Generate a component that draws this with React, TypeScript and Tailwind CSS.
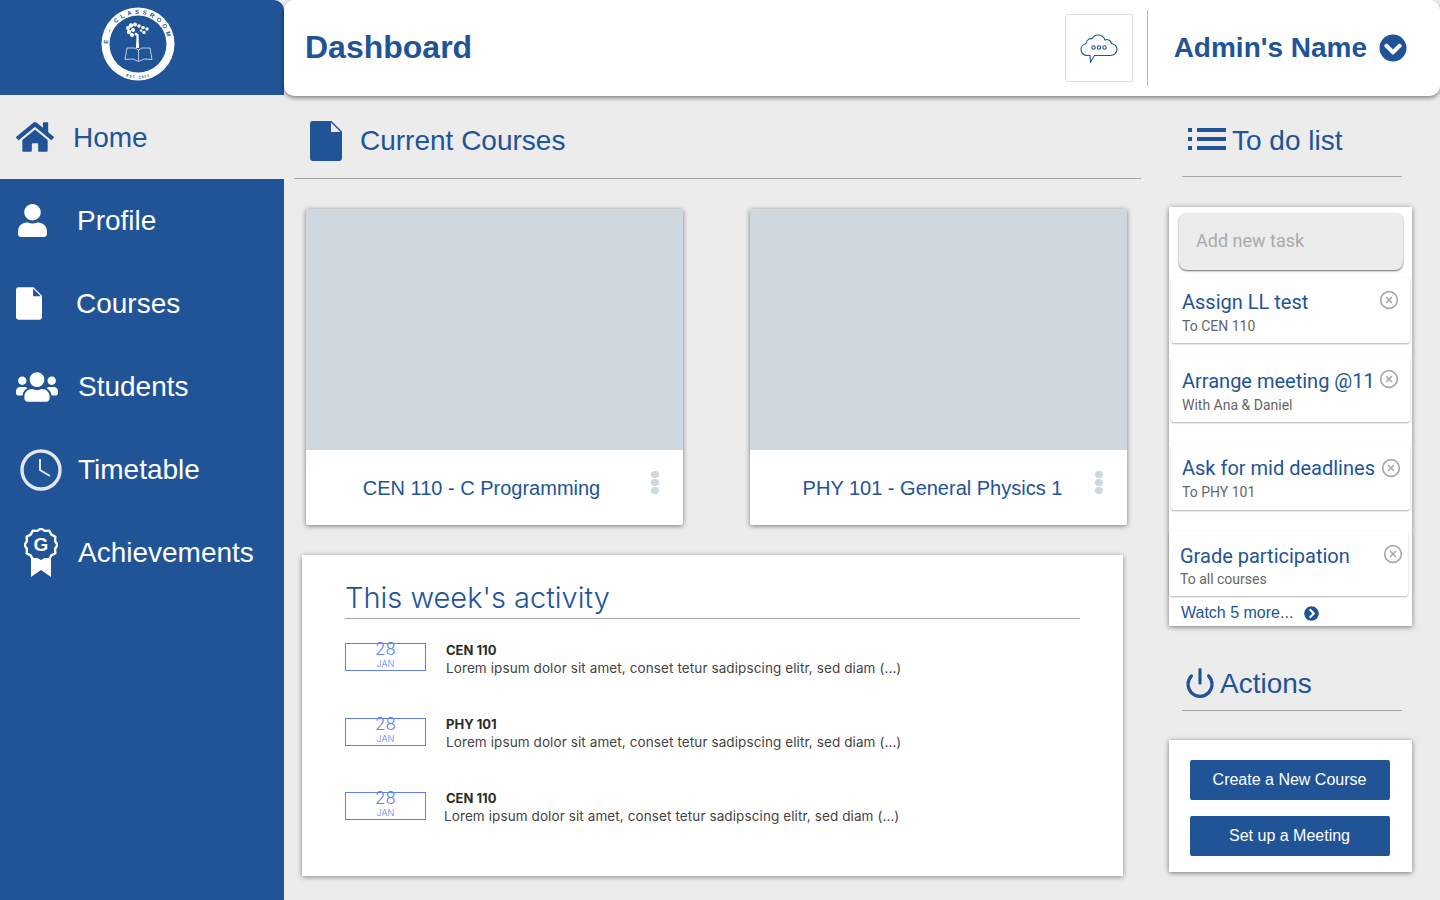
import { CircleX, Power } from "lucide-react";
import {
  FaChevronCircleDown,
  FaChevronCircleRight,
  FaHome,
  FaUser,
  FaUsers,
} from "react-icons/fa";

const burst = Array.from({ length: 24 }, (_, i) => {
  const r = i % 2 === 0 ? 16.5 : 14.6;
  const a = (i * Math.PI) / 12;
  return `${17 + r * Math.sin(a)},${17 - r * Math.cos(a)}`;
}).join(" ");

const DocIcon = ({ className, fold }: { className: string; fold: string }) => (
  <svg viewBox="0 0 32 40" className={className} fill="currentColor">
    <path d="M3 0h18.5L32 10.5V37a3 3 0 0 1-3 3H3a3 3 0 0 1-3-3V3a3 3 0 0 1 3-3z" />
    <path d="M21 1.5 30.5 11H21z" fill={fold} />
  </svg>
);

const AwardIcon = () => (
  <svg viewBox="0 0 34 50" className="h-[50px] w-[34px]">
    <polygon points="7,30 27,30 27,49 17,42 7,49" fill="#fff" />
    <polygon points={burst} fill="#215497" stroke="#fff" strokeWidth="2.4" />
    <text
      x="17"
      y="23"
      textAnchor="middle"
      fontSize="19"
      fontWeight="700"
      fill="#fff"
      fontFamily="'Liberation Sans', sans-serif"
    >
      G
    </text>
  </svg>
);

const ClockIcon = () => (
  <svg viewBox="0 0 42 42" className="h-[42px] w-[42px]" fill="none">
    <circle cx="21" cy="21" r="19" stroke="#e3e8f0" strokeWidth="3.4" />
    <path d="M20 10v11l10 6" stroke="#e3e8f0" strokeWidth="2" />
  </svg>
);

const ChatIcon = () => (
  <svg viewBox="0 0 38 29" className="h-[29px] w-[38px]" fill="none" stroke="#215497" strokeWidth="1.1">
    <path d="M10 21.5H7.5C3.5 21.5 1 18.800 1 15.500c0-3 2.200-5.500 5-5.800C6.800 5.500 9.500 4 12 4.800 13.500 2 15.500 1 18 1c3.500 0 6 2 7 5 1-.5 2-.6 3-.3 2 .5 3.200 2 3.400 3.800 3 .3 5.600 2.700 5.600 5.800 0 3.500-2.800 6.200-6.500 6.200H14.500L10.500 28z" />
    <circle cx="13.500" cy="13.500" r="1.700" />
    <circle cx="19" cy="13.500" r="1.700" />
    <circle cx="24.500" cy="13.500" r="1.700" />
  </svg>
);

const ListIcon = () => (
  <svg viewBox="0 0 38 22" className="-mt-[4px] h-[22px] w-[38px]" fill="#215497">
    <rect x="0" y="0" width="4" height="4" />
    <rect x="0" y="9" width="4" height="4" />
    <rect x="0" y="18" width="4" height="4" />
    <rect x="9" y="0" width="29" height="4" />
    <rect x="9" y="9" width="29" height="4" />
    <rect x="9" y="18" width="29" height="4" />
  </svg>
);

const crown = [
  [27, 21, 2],
  [30, 18.500, 2.200],
  [34, 17.500, 2],
  [38, 19, 1.800],
  [42, 20.500, 1.800],
  [46, 22, 1.700],
  [28, 25, 2.200],
  [32, 23, 2],
  [31, 28, 2],
  [35, 27, 1.500],
  [43, 25.500, 1.700],
  [40, 23.500, 1.300],
];

const Logo = () => (
  <svg viewBox="0 0 74 74" className="h-[74px] w-[74px]">
    <defs>
      <path id="logo-top" d="M7 37a30 30 0 0 1 60 0" />
      <path id="logo-bottom" d="M17 65.100A34.500 34.500 0 0 0 57 65.100" />
    </defs>
    <circle cx="37" cy="37" r="36.500" fill="#fff" />
    <circle cx="37" cy="37" r="28.500" fill="#215497" />
    <text fontSize="6" fontWeight="700" fill="#215497" letterSpacing="3.200" fontFamily="'Liberation Sans', sans-serif">
      <textPath href="#logo-top">E - CLASSROOM</textPath>
    </text>
    <text fontSize="3.800" fontWeight="700" fill="#215497" letterSpacing=".8" textAnchor="middle" fontFamily="'Liberation Sans', sans-serif">
      <textPath href="#logo-bottom" startOffset="50%">
        EST. 2021
      </textPath>
    </text>
    <g fill="#fff">
      {crown.map(([cx, cy, r]) => (
        <circle key={`${cx}-${cy}`} cx={cx} cy={cy} r={r} />
      ))}
      <path d="M35.500 27h2l.5 14h-3z" />
    </g>
    <path
      d="M26 41h8l3.500 2 3.500-2h8l2 11.500-8-.5-5.500 2.500L32 52l-8 .5zM37.500 43v11"
      fill="none"
      stroke="#fff"
      strokeWidth=".7"
    />
  </svg>
);

const navItems = [
  { label: "Profile", row: "pl-[16px] gap-[28px]", icon: <FaUser size={33} /> },
  { label: "Courses", row: "pl-[16px] gap-[34px]", icon: <DocIcon className="h-[33px] w-[26px]" fold="#215497" /> },
  { label: "Students", row: "pl-[16px] gap-[20px]", icon: <FaUsers size={42} /> },
  { label: "Timetable", row: "pl-[20px] gap-[16px]", icon: <ClockIcon /> },
  { label: "Achievements", row: "pl-[24px] gap-[20px]", icon: <AwardIcon /> },
];

const todos = [
  { title: "Assign LL test", sub: "To CEN 110", box: "mt-[8px] ml-[2px] pt-[11px]", subGap: "mt-[1px]", x: "right-[11px] top-[12px]" },
  { title: "Arrange meeting @11", sub: "With Ana & Daniel", box: "mt-[14px] ml-[2px] pt-[11px]", subGap: "mt-[1px]", x: "right-[11px] top-[12px]" },
  { title: "Ask for mid deadlines", sub: "To PHY 101", box: "mt-[23px] ml-[2px] pt-[10px]", subGap: "mt-[1px]", x: "right-[9px] top-[13px]" },
  { title: "Grade participation", sub: "To all courses", box: "mt-[21px] ml-0 pt-[12px]", subGap: "mt-0", x: "right-[5px] top-[13px]" },
];

const activity = [
  { code: "CEN 110", text: "ml-0", box: "mt-0" },
  { code: "PHY 101", text: "ml-0", box: "mt-[1px]" },
  { code: "CEN 110", text: "ml-[-2px]", box: "mt-[1px]" },
];

const courses = [
  { name: "CEN 110 - C Programming", label: "pr-[26px]" },
  { name: "PHY 101 - General Physics 1", label: "pr-[12px]" },
];

export default function App() {
  return (
    <div className="flex h-[900px] w-[1440px] overflow-hidden bg-[#ececec] font-['Liberation_Sans',sans-serif] text-[#215497]">
      <aside className="flex w-[284px] flex-col">
        <div className="flex h-[95px] items-start justify-center rounded-tr-[10px] bg-[#215497] pt-[7px] pr-[8px]">
          <Logo />
        </div>
        <div className="flex h-[84px] items-center gap-[19px] pl-[16px] text-[28px]">
          <FaHome size={38} />
          <span className="mt-[2px]">Home</span>
        </div>
        <nav className="flex-1 bg-[#215497] text-white">
          {navItems.map((item) => (
            <div key={item.label} className={`flex h-[83px] items-center text-[28px] ${item.row}`}>
              {item.icon}
              {item.label}
            </div>
          ))}
        </nav>
      </aside>

      <main className="flex flex-1 flex-col">
        <header className="relative z-10 flex h-[96px] items-center rounded-[10px] bg-white pr-[33px] pl-[21px] shadow-[0_2px_4px_rgba(0,0,0,0.45)]">
          <h1 className="-mt-[2px] text-[32px] font-bold">Dashboard</h1>
          <button className="mr-[14px] ml-auto flex h-[68px] w-[68px] items-center justify-center rounded-[3px] border border-[#dcdcdc]">
            <ChatIcon />
          </button>
          <div className="mr-[26px] h-[76px] w-px bg-[#b5b5b5]" />
          <span className="text-[28px] font-bold">Admin's Name</span>
          <FaChevronCircleDown size={28} className="ml-[12px]" />
        </header>

        <div className="flex flex-1">
          <section className="w-[867px]">
            <div className="mx-[10px] flex h-[83px] items-center gap-[18px] border-b border-[#a6a6a6] pt-[8px] pl-[16px] text-[28px]">
              <DocIcon className="h-[40px] w-[32px]" fold="#ececec" />
              Current Courses
            </div>
            <div className="mt-[30px] flex gap-[67px] pl-[22px]">
              {courses.map((course) => (
                <div key={course.name} className="h-[316px] w-[377px] rounded-[2px] bg-white shadow-[0_1px_5px_rgba(0,0,0,0.5)]">
                  <div className="h-[241px] bg-[#cfd8de]" />
                  <div className={`relative flex h-[75px] items-center justify-center pt-[1px] text-[20px] ${course.label}`}>
                    {course.name}
                    <div className="absolute top-[21px] right-[24px] flex flex-col gap-[1px]">
                      <span className="h-[7px] w-[8px] rounded-full bg-[#cfd8de]" />
                      <span className="h-[7px] w-[8px] rounded-full bg-[#cfd8de]" />
                      <span className="h-[7px] w-[8px] rounded-full bg-[#cfd8de]" />
                    </div>
                  </div>
                </div>
              ))}
            </div>
            <div className="mt-[30px] ml-[18px] h-[321px] w-[821px] bg-white px-[43px] pt-[23px] font-['Inter',sans-serif] shadow-[0_1px_5px_rgba(0,0,0,0.45)]">
              <h2 className="h-[41px] border-b border-[#a6a6a6] text-[29px] leading-[40px] font-light">
                This week's activity
              </h2>
              <div className="mt-[24px] flex flex-col gap-[46px]">
                {activity.map((row, i) => (
                  <div key={i} className="flex h-[28px] gap-[20px]">
                    <div className={`flex h-[28px] w-[81px] flex-col items-center border border-[#5f80f0] leading-none text-[#5f80f0] ${row.box}`}>
                      <span className="mt-[-4px] text-[17px] leading-[18px] font-light">28</span>
                      <span className="text-[9px] leading-[11px] font-light">JAN</span>
                    </div>
                    <div className="-mt-[2px] text-[13.500px] leading-[18px] text-[#2b2b2b]">
                      <div className="text-[13px] font-bold">{row.code}</div>
                      <div className={`tracking-[0.1px] text-[#444] ${row.text}`}>
                        Lorem ipsum dolor sit amet, conset tetur sadipscing elitr, sed diam (...)
                      </div>
                    </div>
                  </div>
                ))}
              </div>
            </div>
          </section>

          <section className="flex-1">
            <div className="ml-[31px] flex h-[81px] w-[220px] items-center gap-[6px] border-b border-[#a6a6a6] pt-[10px] pl-[6px] text-[28px]">
              <ListIcon />
              To do list
            </div>
            <div className="mt-[30px] ml-[18px] h-[419px] w-[243px] bg-white pt-[6px] font-['Roboto',sans-serif] shadow-[0_1px_5px_rgba(0,0,0,0.5)]">
              <div className="ml-[10px] flex h-[57px] w-[224px] items-center rounded-[8px] bg-[#ececec] pb-[2px] pl-[17px] text-[18px] text-[#aaa] shadow-[0_1px_2px_rgba(0,0,0,0.6)]">
                Add new task
              </div>
              {todos.map((t) => (
                <div
                  key={t.title}
                  className={`relative h-[65px] w-[239px] rounded-[3px] bg-white pl-[11px] shadow-[0_1px_2px_rgba(0,0,0,0.3)] ${t.box}`}
                >
                  <div className="text-[20px] leading-[26px]">{t.title}</div>
                  <div className={`text-[14px] leading-[20px] text-[#666] ${t.subGap}`}>{t.sub}</div>
                  <CircleX size={20} strokeWidth={2} className={`absolute text-[#aaa] ${t.x}`} />
                </div>
              ))}
              <div className="mt-[5px] flex items-center gap-[11px] pl-[12px] font-['Liberation_Sans',sans-serif] text-[16px]">
                Watch 5 more...
                <FaChevronCircleRight size={15} />
              </div>
            </div>

            <div className="mt-[38px] ml-[31px] flex h-[47px] w-[220px] items-center gap-[4px] border-b border-[#a6a6a6] pb-[6px] pl-[2px] text-[28px]">
              <Power size={32} strokeWidth={2.4} className="-mt-[2px]" />
              Actions
            </div>
            <div className="mt-[29px] ml-[18px] flex h-[132px] w-[243px] flex-col items-center gap-[16px] bg-white pt-[20px] pr-[2px] shadow-[0_1px_5px_rgba(0,0,0,0.5)]">
              <button className="h-[40px] w-[200px] rounded-[2px] bg-[#215497] text-[16px] text-white">
                Create a New Course
              </button>
              <button className="h-[40px] w-[200px] rounded-[2px] bg-[#215497] text-[16px] text-white">
                Set up a Meeting
              </button>
            </div>
          </section>
        </div>
      </main>
    </div>
  );
}
